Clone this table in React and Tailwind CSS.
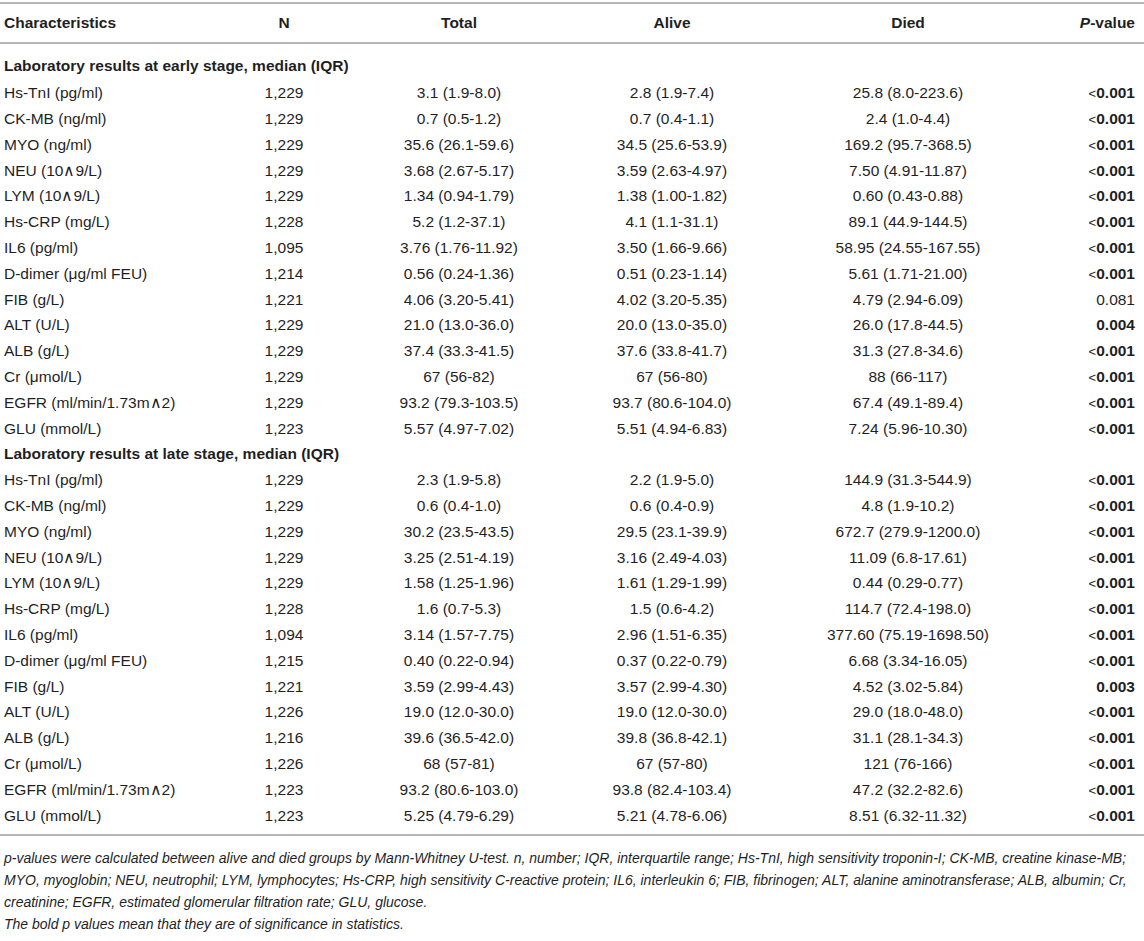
import React from "react";

const early = [
  ["Hs-TnI (pg/ml)", "1,229", "3.1 (1.9-8.0)", "2.8 (1.9-7.4)", "25.8 (8.0-223.6)", "<0.001", true],
  ["CK-MB (ng/ml)", "1,229", "0.7 (0.5-1.2)", "0.7 (0.4-1.1)", "2.4 (1.0-4.4)", "<0.001", true],
  ["MYO (ng/ml)", "1,229", "35.6 (26.1-59.6)", "34.5 (25.6-53.9)", "169.2 (95.7-368.5)", "<0.001", true],
  ["NEU (10∧9/L)", "1,229", "3.68 (2.67-5.17)", "3.59 (2.63-4.97)", "7.50 (4.91-11.87)", "<0.001", true],
  ["LYM (10∧9/L)", "1,229", "1.34 (0.94-1.79)", "1.38 (1.00-1.82)", "0.60 (0.43-0.88)", "<0.001", true],
  ["Hs-CRP (mg/L)", "1,228", "5.2 (1.2-37.1)", "4.1 (1.1-31.1)", "89.1 (44.9-144.5)", "<0.001", true],
  ["IL6 (pg/ml)", "1,095", "3.76 (1.76-11.92)", "3.50 (1.66-9.66)", "58.95 (24.55-167.55)", "<0.001", true],
  ["D-dimer (μg/ml FEU)", "1,214", "0.56 (0.24-1.36)", "0.51 (0.23-1.14)", "5.61 (1.71-21.00)", "<0.001", true],
  ["FIB (g/L)", "1,221", "4.06 (3.20-5.41)", "4.02 (3.20-5.35)", "4.79 (2.94-6.09)", "0.081", false],
  ["ALT (U/L)", "1,229", "21.0 (13.0-36.0)", "20.0 (13.0-35.0)", "26.0 (17.8-44.5)", "0.004", true],
  ["ALB (g/L)", "1,229", "37.4 (33.3-41.5)", "37.6 (33.8-41.7)", "31.3 (27.8-34.6)", "<0.001", true],
  ["Cr (μmol/L)", "1,229", "67 (56-82)", "67 (56-80)", "88 (66-117)", "<0.001", true],
  ["EGFR (ml/min/1.73m∧2)", "1,229", "93.2 (79.3-103.5)", "93.7 (80.6-104.0)", "67.4 (49.1-89.4)", "<0.001", true],
  ["GLU (mmol/L)", "1,223", "5.57 (4.97-7.02)", "5.51 (4.94-6.83)", "7.24 (5.96-10.30)", "<0.001", true],
];

const late = [
  ["Hs-TnI (pg/ml)", "1,229", "2.3 (1.9-5.8)", "2.2 (1.9-5.0)", "144.9 (31.3-544.9)", "<0.001", true],
  ["CK-MB (ng/ml)", "1,229", "0.6 (0.4-1.0)", "0.6 (0.4-0.9)", "4.8 (1.9-10.2)", "<0.001", true],
  ["MYO (ng/ml)", "1,229", "30.2 (23.5-43.5)", "29.5 (23.1-39.9)", "672.7 (279.9-1200.0)", "<0.001", true],
  ["NEU (10∧9/L)", "1,229", "3.25 (2.51-4.19)", "3.16 (2.49-4.03)", "11.09 (6.8-17.61)", "<0.001", true],
  ["LYM (10∧9/L)", "1,229", "1.58 (1.25-1.96)", "1.61 (1.29-1.99)", "0.44 (0.29-0.77)", "<0.001", true],
  ["Hs-CRP (mg/L)", "1,228", "1.6 (0.7-5.3)", "1.5 (0.6-4.2)", "114.7 (72.4-198.0)", "<0.001", true],
  ["IL6 (pg/ml)", "1,094", "3.14 (1.57-7.75)", "2.96 (1.51-6.35)", "377.60 (75.19-1698.50)", "<0.001", true],
  ["D-dimer (μg/ml FEU)", "1,215", "0.40 (0.22-0.94)", "0.37 (0.22-0.79)", "6.68 (3.34-16.05)", "<0.001", true],
  ["FIB (g/L)", "1,221", "3.59 (2.99-4.43)", "3.57 (2.99-4.30)", "4.52 (3.02-5.84)", "0.003", true],
  ["ALT (U/L)", "1,226", "19.0 (12.0-30.0)", "19.0 (12.0-30.0)", "29.0 (18.0-48.0)", "<0.001", true],
  ["ALB (g/L)", "1,216", "39.6 (36.5-42.0)", "39.8 (36.8-42.1)", "31.1 (28.1-34.3)", "<0.001", true],
  ["Cr (μmol/L)", "1,226", "68 (57-81)", "67 (57-80)", "121 (76-166)", "<0.001", true],
  ["EGFR (ml/min/1.73m∧2)", "1,223", "93.2 (80.6-103.0)", "93.8 (82.4-103.4)", "47.2 (32.2-82.6)", "<0.001", true],
  ["GLU (mmol/L)", "1,223", "5.25 (4.79-6.29)", "5.21 (4.78-6.06)", "8.51 (6.32-11.32)", "<0.001", true],
];

const cols = "grid grid-cols-[214px_140px_210px_216px_256px_1fr]";

function PValue({ v, bold }) {
  if (v.startsWith("<")) {
    return (
      <span>
        <span className="font-normal text-[13px]">&lt;</span>
        <span className="font-bold">{v.slice(1)}</span>
      </span>
    );
  }
  return <span className={bold ? "font-bold" : "font-normal"}>{v}</span>;
}

function Row({ r }) {
  return (
    <div className={`${cols} h-[25.8px] items-center whitespace-nowrap`}>
      <div className="pl-[4px]">{r[0]}</div>
      <div className="text-center">{r[1]}</div>
      <div className="text-center">{r[2]}</div>
      <div className="text-center">{r[3]}</div>
      <div className="text-center">{r[4]}</div>
      <div className="text-right pr-[9px]">
        <PValue v={r[5]} bold={r[6]} />
      </div>
    </div>
  );
}

export default function App() {
  return (
    <div className="w-[1144px] h-[941px] bg-white text-[#1f1f1f] text-[15.5px] font-['Liberation_Sans',Arial,sans-serif] overflow-hidden">
      <div className="pt-[2px]">
        <div className="border-t-2 border-[#b5b5b5]" />
        <div className={`${cols} h-[38px] items-center font-bold whitespace-nowrap`}>
          <div className="pl-[4px]">Characteristics</div>
          <div className="text-center">N</div>
          <div className="text-center">Total</div>
          <div className="text-center">Alive</div>
          <div className="text-center">Died</div>
          <div className="text-right pr-[9px]">
            <i>P</i>-value
          </div>
        </div>
        <div className="border-t-2 border-[#b5b5b5]" />
        <div className="h-[36px] pt-[8px] flex items-center pl-[4px] font-bold">
          Laboratory results at early stage, median (IQR)
        </div>
        {early.map((r, i) => (
          <Row key={"e" + i} r={r} />
        ))}
        <div className="h-[25.8px] flex items-center pl-[4px] font-bold">
          Laboratory results at late stage, median (IQR)
        </div>
        {late.map((r, i) => (
          <Row key={"l" + i} r={r} />
        ))}
        <div className="mt-[6px] border-t-2 border-[#b5b5b5]" />
        <div className="pt-[11px] pl-[4px] italic text-[14px] leading-[22px] whitespace-nowrap">
          <div>
            p-values were calculated between alive and died groups by Mann-Whitney U-test. n, number; IQR, interquartile range; Hs-TnI, high sensitivity troponin-I; CK-MB, creatine kinase-MB;
          </div>
          <div>
            MYO, myoglobin; NEU, neutrophil; LYM, lymphocytes; Hs-CRP, high sensitivity C-reactive protein; IL6, interleukin 6; FIB, fibrinogen; ALT, alanine aminotransferase; ALB, albumin; Cr,
          </div>
          <div>creatinine; EGFR, estimated glomerular filtration rate; GLU, glucose.</div>
          <div>The bold p values mean that they are of significance in statistics.</div>
        </div>
      </div>
    </div>
  );
}
